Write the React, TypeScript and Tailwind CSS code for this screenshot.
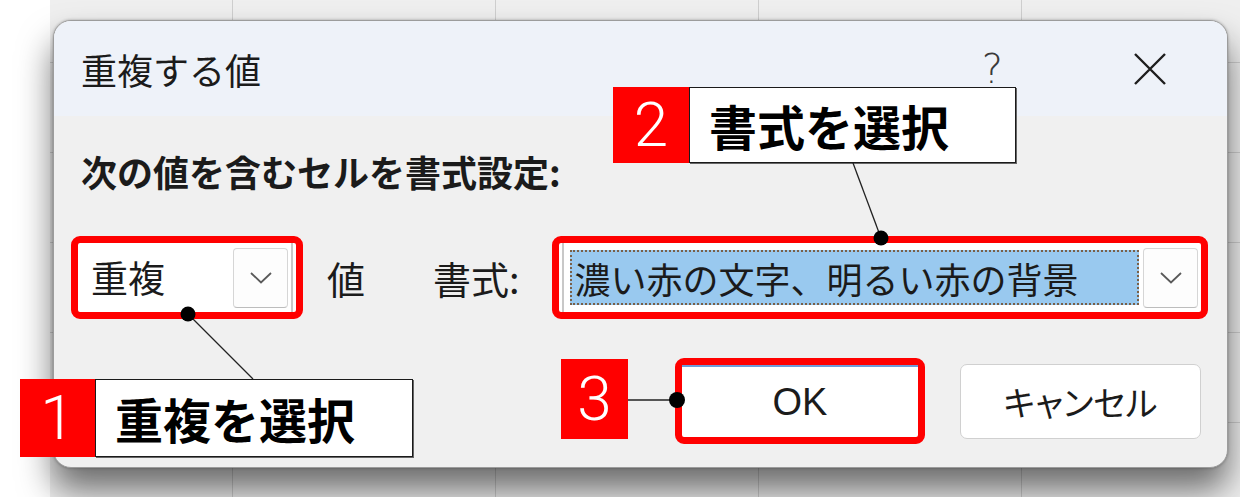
import React from "react";

function Chevron() {
  return (
    <svg width="22" height="12" viewBox="0 0 22 12" fill="none">
      <polyline points="1,1 11,10.5 21,1" stroke="#5a5a5a" strokeWidth="1.8" />
    </svg>
  );
}

function DropButton() {
  return (
    <div className="flex h-[60px] w-[55px] shrink-0 items-center justify-center rounded-[4px] border border-[#d6d6d6] border-b-[#bdbdbd] bg-[#fdfdfd]">
      <Chevron />
    </div>
  );
}

function Callout({ num, text, numW }: { num: string; text: string; numW: string }) {
  return (
    <div className="flex h-full">
      <div
        className={`flex h-full items-center justify-center bg-[#ff0000] font-['Roboto','Noto_Sans_CJK_JP',sans-serif] text-[62px] font-light leading-none text-white ${numW}`}
      >
        {num}
      </div>
      <div className="flex h-full flex-1 items-center border-[1.5px] border-[#1a1a1a] bg-white pl-[19px] text-[48px] font-bold text-black shadow-[1px_1px_0_#666]">
        {text}
      </div>
    </div>
  );
}

export default function App() {
  return (
    <div className="relative flex h-[497px] w-[1240px] overflow-hidden bg-white font-['Noto_Sans_CJK_JP',sans-serif] text-[#1b1b1b]">
      {/* sheet behind the dialog */}
      <div className="w-[50px] shrink-0 bg-white" />
      <div className="flex-1 bg-[#efefef] bg-[linear-gradient(to_right,#cfcfcf_1px,transparent_1px),linear-gradient(to_bottom,#cfcfcf_1px,transparent_1px)] bg-[size:263px_90px] bg-[position:182px_62px]" />

      {/* dialog */}
      <div className="absolute left-[53px] top-[20px] flex h-[448px] w-[1175px] flex-col overflow-hidden rounded-[18px] border border-[#9c9c9c] bg-[#f0f0f0] shadow-[0_0_3px_rgba(0,0,0,0.3),0_22px_34px_rgba(0,0,0,0.55)]">
        <div className="flex h-[95px] shrink-0 items-center bg-[#eef2f9] pl-[27px] pr-[60px]">
          <span className="text-[36px] leading-none">重複する値</span>
          <span className="ml-auto mr-[130px] font-['DejaVu_Sans','Liberation_Sans',sans-serif] text-[40px] font-light leading-none text-[#3a3a3a]">?</span>
          <svg width="34" height="34" viewBox="0 0 34 34">
            <path d="M2 2 L32 32 M32 2 L2 32" stroke="#1e1e1e" strokeWidth="2.4" />
          </svg>
        </div>

        <div className="flex flex-1 flex-col">
          <div className="mt-[33px] h-[44px] pl-[27px] text-[36px] font-bold leading-[44px]">次の値を含むセルを書式設定:</div>

          <div className="mt-[43px] flex h-[83px] items-center pl-[17px]">
            <div className="flex h-[83px] w-[232px] rounded-[9px] border-[7px] border-[#ff0000] bg-white">
              <div className="mr-[3px] flex flex-1 items-center border-r-2 border-[#c8c8c8] pl-[13px] pr-[3px]">
                <span className="flex-1 text-[37px] leading-none">重複</span>
                <DropButton />
              </div>
            </div>
            <span className="ml-[24px] text-[38px] leading-none">値</span>
            <span className="ml-[68px] text-[38px] leading-none">書式:</span>
            <div className="ml-[32px] mr-[19px] flex h-[83px] flex-1 rounded-[9px] border-[7px] border-[#ff0000] bg-white">
              <div className="ml-[3px] flex flex-1 items-center border-l-2 border-[#c8c8c8] pl-[6px] pr-[3px]">
                <div className="mr-[4px] flex h-[55px] flex-1 items-center border-2 border-dotted border-[#7a6048] bg-[#99c9ef] pl-[3px] text-[36px] leading-none">
                  濃い赤の文字、明るい赤の背景
                </div>
                <DropButton />
              </div>
            </div>
          </div>

          <div className="mt-[39px] flex items-center justify-end pr-[26px]">
            <div className="flex h-[86px] w-[250px] rounded-[9px] border-[7px] border-[#ff0000] bg-white">
              <div className="flex flex-1 items-center justify-center border-t-2 border-[#6d9bd8] font-['Liberation_Sans',sans-serif] text-[38px]">
                OK
              </div>
            </div>
            <div className="ml-[35px] flex h-[75px] w-[241px] items-center justify-center rounded-[7px] border border-[#d0d0d0] bg-white text-[34px] [font-feature-settings:'palt']">
              キャンセル
            </div>
          </div>
        </div>
      </div>

      {/* annotations */}
      <div className="absolute left-[613px] top-[87px] h-[76px] w-[403px]">
        <Callout num="2" text="書式を選択" numW="w-[76px]" />
      </div>
      <div className="absolute left-[20px] top-[379px] h-[78px] w-[393px]">
        <Callout num="1" text="重複を選択" numW="w-[75px]" />
      </div>
      <div className="absolute left-[561px] top-[359px] flex h-[80px] w-[67px] items-center justify-center bg-[#ff0000] font-['Roboto','Noto_Sans_CJK_JP',sans-serif] text-[62px] font-light leading-none text-white">
        3
      </div>

      <svg className="pointer-events-none absolute left-0 top-0" width="1240" height="497">
        <line x1="188" y1="314" x2="253" y2="379" stroke="#222" strokeWidth="1.3" />
        <circle cx="188" cy="314" r="7.5" fill="#000" />
        <line x1="853" y1="163" x2="881" y2="238" stroke="#222" strokeWidth="1.3" />
        <circle cx="881" cy="238" r="7.5" fill="#000" />
        <line x1="628" y1="400" x2="677" y2="400" stroke="#222" strokeWidth="1.3" />
        <circle cx="677" cy="400" r="8" fill="#000" />
      </svg>
    </div>
  );
}
